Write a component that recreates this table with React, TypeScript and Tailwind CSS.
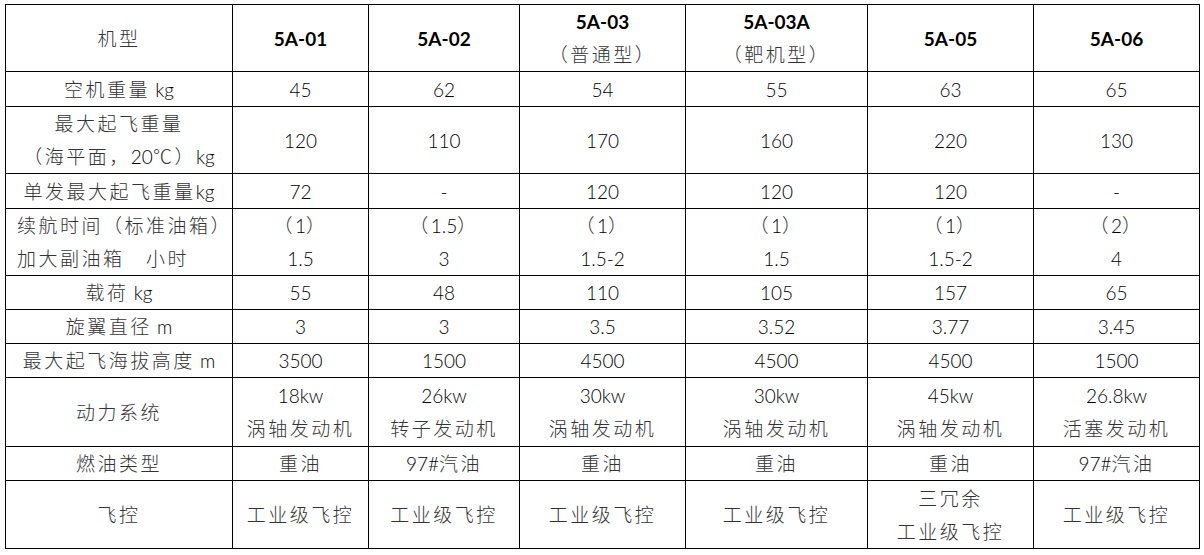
import React from "react";

const CJK = /[\u3000-\u9fff\uff00-\uffef\u2103]/;

// split a line into cjk / latin runs so only the cjk glyphs get the wide tracking
const Line = ({ text, bold = false }: { text: string; bold?: boolean }) => {
	const runs: { s: string; cjk: boolean }[] = [];
	for (const ch of text) {
		const cjk = CJK.test(ch);
		const last = runs[runs.length - 1];
		if (last && last.cjk === cjk) last.s += ch;
		else runs.push({ s: ch, cjk });
	}
	return (
		<div className="whitespace-pre leading-[33px]">
			{runs.map((r, i) =>
				r.cjk ? (
					<span key={i} className="tracking-[2.5px] text-[#333] font-light">
						{r.s}
					</span>
				) : (
					<span key={i} className={bold ? "font-bold text-black" : "font-light text-black"}>
						{r.s}
					</span>
				)
			)}
		</div>
	);
};

type Cell = string[];

interface Row {
	h: string;
	cells: Cell[];
}

const rows: Row[] = [
	{
		h: "h-[66px]",
		cells: [
			["机型"],
			["5A-01"],
			["5A-02"],
			["5A-03", "（普通型）"],
			["5A-03A", "（靶机型）"],
			["5A-05"],
			["5A-06"],
		],
	},
	{ h: "h-[34px]", cells: [["空机重量 kg"], ["45"], ["62"], ["54"], ["55"], ["63"], ["65"]] },
	{
		h: "h-[66px]",
		cells: [["最大起飞重量", "（海平面，20℃）kg"], ["120"], ["110"], ["170"], ["160"], ["220"], ["130"]],
	},
	{ h: "h-[34px]", cells: [["单发最大起飞重量kg"], ["72"], ["-"], ["120"], ["120"], ["120"], ["-"]] },
	{
		h: "h-[66px]",
		cells: [
			["续航时间（标准油箱）", "加大副油箱　小时"],
			["（1）", "1.5"],
			["（1.5）", "3"],
			["（1）", "1.5-2"],
			["（1）", "1.5"],
			["（1）", "1.5-2"],
			["（2）", "4"],
		],
	},
	{ h: "h-[33px]", cells: [["载荷 kg"], ["55"], ["48"], ["110"], ["105"], ["157"], ["65"]] },
	{ h: "h-[33px]", cells: [["旋翼直径 m"], ["3"], ["3"], ["3.5"], ["3.52"], ["3.77"], ["3.45"]] },
	{ h: "h-[33px]", cells: [["最大起飞海拔高度 m"], ["3500"], ["1500"], ["4500"], ["4500"], ["4500"], ["1500"]] },
	{
		h: "h-[68px]",
		cells: [
			["动力系统"],
			["18kw", "涡轴发动机"],
			["26kw", "转子发动机"],
			["30kw", "涡轴发动机"],
			["30kw", "涡轴发动机"],
			["45kw", "涡轴发动机"],
			["26.8kw", "活塞发动机"],
		],
	},
	{ h: "h-[33px]", cells: [["燃油类型"], ["重油"], ["97#汽油"], ["重油"], ["重油"], ["重油"], ["97#汽油"]] },
	{
		h: "h-[67px]",
		cells: [
			["飞控"],
			["工业级飞控"],
			["工业级飞控"],
			["工业级飞控"],
			["工业级飞控"],
			["三冗余", "工业级飞控"],
			["工业级飞控"],
		],
	},
];

const App = () => {
	return (
		<div className="min-h-screen bg-white pt-[4px] pl-[5px]">
			<div
				className="grid w-fit grid-cols-[226px_135px_150px_165px_181px_165px_165px] gap-px bg-black p-px text-[19px]"
				style={{ fontFamily: 'Lato, "Noto Sans CJK SC", sans-serif' }}
			>
				{rows.map((row, ri) =>
					row.cells.map((cell, ci) => {
						const leftAlign = ri === 4 && ci === 0;
						return (
							<div
								key={`${ri}-${ci}`}
								className={`${row.h} flex flex-col justify-center bg-white ${
									leftAlign ? "items-start pl-[11px] tracking-[-1px]" : "items-center"
								}`}
							>
								{cell.map((line, li) => (
									<Line key={li} text={line} bold={ri === 0 && ci > 0} />
								))}
							</div>
						);
					})
				)}
			</div>
		</div>
	);
};

export default App;
